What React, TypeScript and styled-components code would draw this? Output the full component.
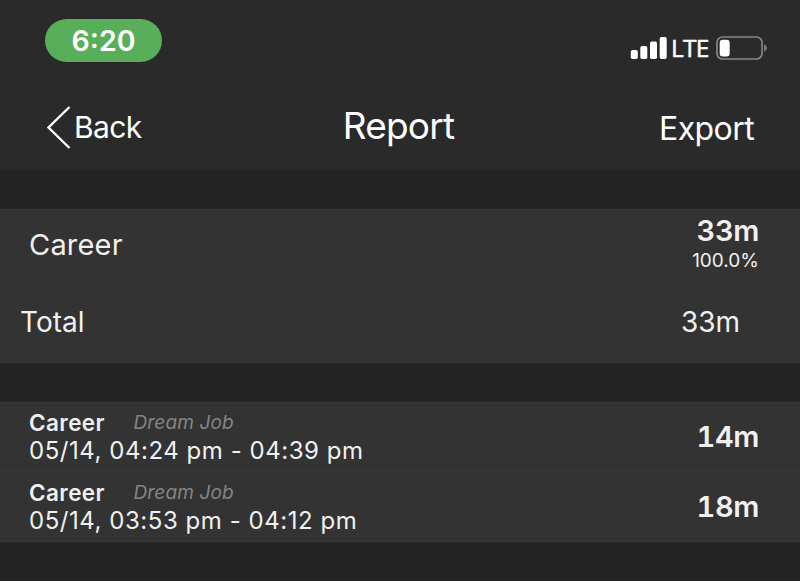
import React from 'react';
import styled, { createGlobalStyle } from 'styled-components';

const GlobalStyle = createGlobalStyle`
  * { box-sizing: border-box; }
  body {
    margin: 0;
    background: #242424;
    color: #f0f0f0;
    font-family: Inter, Roboto, sans-serif;
    -webkit-font-smoothing: antialiased;
  }
`;

const Screen = styled.main`
  display: flex;
  flex-direction: column;
  width: 800px;
  height: 581px;
  overflow: hidden;
  background: #242424;
`;

const Header = styled.header`
  height: 170px;
  flex: none;
  background: #2a2a2a;
  color: #fff;
`;

const StatusBar = styled.div`
  display: flex;
  justify-content: space-between;
  align-items: flex-start;
  height: 84px;
  padding: 19px 32px 0 45px;
`;

const TimePill = styled.div`
  width: 117px;
  height: 43px;
  border-radius: 22px;
  background: #59ae5a;
  font-size: 28.5px;
  font-weight: 600;
  line-height: 44px;
  text-align: center;
`;

const Indicators = styled.div`
  display: flex;
  align-items: center;
  height: 24px;
  margin-top: 17px;
`;

const Carrier = styled.span`
  width: 47px;
  padding-left: 3px;
  font-family: "Open Sans", "Noto Sans", sans-serif;
  font-size: 24.5px;
  font-weight: 500;
  line-height: 24px;
  letter-spacing: -0.8px;
  -webkit-text-stroke: 0.5px #fff;
`;

const NavBar = styled.nav`
  display: grid;
  grid-template-columns: 1fr auto 1fr;
  align-items: center;
  height: 86px;
  padding: 0 46px;
`;

const BackButton = styled.button`
  display: flex;
  align-items: center;
  gap: 2px;
  padding: 0;
  border: 0;
  background: none;
  color: inherit;
  font: 400 30px/44px Inter, sans-serif;
  letter-spacing: -0.6px;
`;

const Title = styled.h1`
  margin: 0 3px 0 0;
  padding-bottom: 2px;
  font-size: 37px;
  font-weight: 400;
  line-height: 44px;
  letter-spacing: -0.8px;
`;

const ExportButton = styled.button`
  justify-self: end;
  padding: 3px 0 0;
  border: 0;
  background: none;
  color: inherit;
  font: 400 32px/44px Inter, sans-serif;
  letter-spacing: -0.6px;
`;

const Section = styled.section`
  flex: none;
  margin-top: 39px;
  background: #333;
  border-top: 1px solid #383838;
  border-bottom: 1px solid #383838;
`;

const Row = styled.div<{ $height: number; $divider?: boolean }>`
  display: flex;
  align-items: center;
  justify-content: space-between;
  height: ${(p) => p.$height}px;
  padding: 0 41px 0 29px;
  border-bottom: ${(p) => (p.$divider ? '1px solid #373737' : '0')};
`;

const TotalRow = styled(Row)`
  padding: 3px 60px 0 20px;
  font-size: 28px;
`;

const Category = styled.span`
  padding: 2px 0 0;
  font-size: 29px;
  letter-spacing: 0.2px;
`;

const Stack = styled.div`
  display: flex;
  flex-direction: column;
  align-items: flex-end;
`;

const Duration = styled.span`
  font-size: 29px;
  font-weight: 600;
  font-variant-numeric: tabular-nums;
  line-height: 34px;
  letter-spacing: -0.4px;
`;

const Percent = styled.span`
  font-size: 19px;
  line-height: 25px;
`;

const Entry = styled.div<{ $last: boolean }>`
  display: flex;
  flex-direction: column;
  padding: ${(p) => (p.$last ? '1px 0 0' : '0 0 1px')};
`;

const EntryHeading = styled.div`
  display: flex;
  align-items: center;
  line-height: 28px;
`;

const EntryName = styled.span`
  width: 104.5px;
  font-size: 22.5px;
  font-weight: 600;
  letter-spacing: 0.4px;
`;

const Project = styled.em`
  color: #858585;
  font-size: 19px;
  letter-spacing: 0.15px;
`;

const Period = styled.span`
  font-size: 24px;
  line-height: 28px;
  letter-spacing: 0.54px;
`;

const SignalIcon = () => (
  <svg width="38" height="24" viewBox="0 0 38 24" fill="#fff">
    <rect x="0.8" y="14" width="7" height="9" rx="1.8" />
    <rect x="10.3" y="10" width="7" height="13" rx="1.8" />
    <rect x="20" y="5.5" width="7" height="17.5" rx="1.8" />
    <rect x="29.7" y="1" width="7" height="22" rx="1.8" />
  </svg>
);

const BatteryIcon = () => (
  <svg width="53" height="24" viewBox="0 0 53 24">
    <rect x="2" y="1" width="45" height="22" rx="5.5" fill="none" stroke="#858585" strokeWidth="1.7" />
    <rect x="4.7" y="3.8" width="10" height="16.6" rx="3" fill="#fff" />
    <path d="M49.2 8q2.6 1.4 2.6 4t-2.6 4z" fill="#858585" />
  </svg>
);

const ChevronIcon = () => (
  <svg width="26" height="44" viewBox="0 0 26 44" fill="none" stroke="#fff" strokeWidth="2.4">
    <path d="M23.5 2 2.5 22.5l21 20.5" />
  </svg>
);

const entries = [
  { period: '05/14, 04:24 pm - 04:39 pm', duration: '14m' },
  { period: '05/14, 03:53 pm - 04:12 pm', duration: '18m' },
];

export default function App() {
  return (
    <Screen>
      <GlobalStyle />
      <Header>
        <StatusBar>
          <TimePill>6:20</TimePill>
          <Indicators>
            <SignalIcon />
            <Carrier>LTE</Carrier>
            <BatteryIcon />
          </Indicators>
        </StatusBar>
        <NavBar>
          <BackButton>
            <ChevronIcon />
            Back
          </BackButton>
          <Title>Report</Title>
          <ExportButton>Export</ExportButton>
        </NavBar>
      </Header>
      <Section>
        <Row $height={68} $divider>
          <Category>Career</Category>
          <Stack>
            <Duration>33m</Duration>
            <Percent>100.0%</Percent>
          </Stack>
        </Row>
        <TotalRow $height={84}>
          <span>Total</span>
          <span>33m</span>
        </TotalRow>
      </Section>
      <Section>
        {entries.map((entry, i) => {
          const last = i === entries.length - 1;
          return (
            <Row key={entry.period} $height={69} $divider={!last}>
              <Entry $last={last}>
                <EntryHeading>
                  <EntryName>Career</EntryName>
                  <Project>Dream Job</Project>
                </EntryHeading>
                <Period>{entry.period}</Period>
              </Entry>
              <Duration>{entry.duration}</Duration>
            </Row>
          );
        })}
      </Section>
    </Screen>
  );
}
